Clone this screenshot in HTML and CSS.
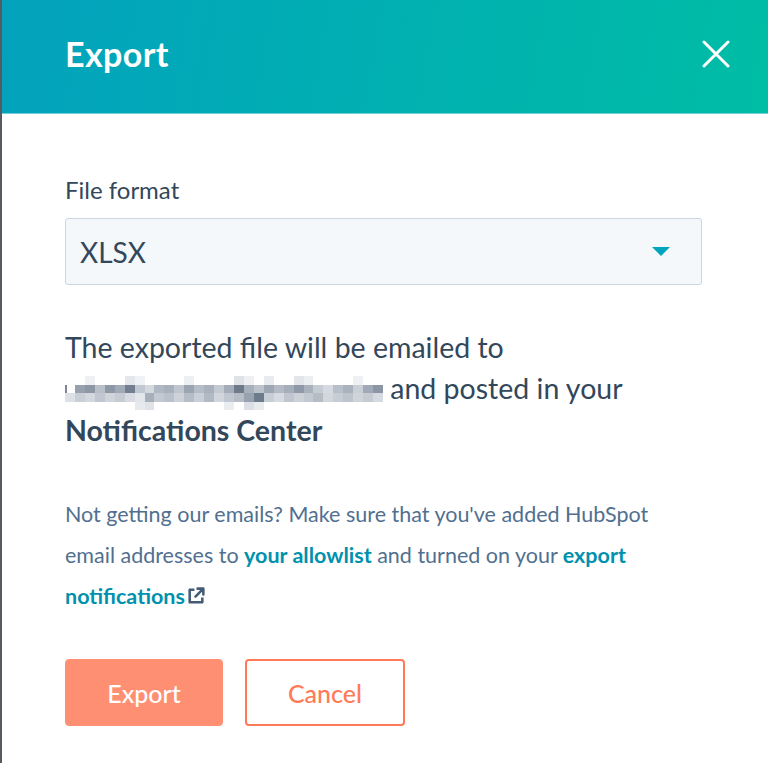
FILE: index.html
```html
<!DOCTYPE html>
<html lang="en">
<head>
<meta charset="utf-8">
<title>Export</title>
<link rel="stylesheet" href="styles.css">
</head>
<body>
<div class="modal">
  <header class="modal-header">
    <h1 class="modal-title">Export</h1>
    <button class="close" aria-label="Close">
      <svg width="28" height="28" viewBox="0 0 28 28"><path d="M2 2 L26 26 M26 2 L2 26" stroke="#fff" stroke-width="3" stroke-linecap="round" fill="none"/></svg>
    </button>
  </header>
  <main class="modal-body">
    <label class="field-label">File format</label>
    <div class="select">
      <span class="select-value">XLSX</span>
      <svg class="caret" width="18" height="9" viewBox="0 0 18 9"><path d="M0 0 H18 L9 9 Z" fill="#00a4bd"/></svg>
    </div>
    <p class="lead">The exported file will be emailed to <span class="redacted"><svg width="318" height="34" viewBox="0 0 32 4" preserveAspectRatio="none" shape-rendering="crispEdges">
      <rect x="0" y="1" width="0.2" height="1" fill="#7d8796"/>
      <rect x="2" y="0" width="1" height="1" fill="#eef0f3"/>
      <rect x="6" y="0" width="1" height="1" fill="#e4e8ec"/>
      <rect x="7" y="0" width="1" height="1" fill="#f0f2f5"/>
      <rect x="12" y="0" width="1" height="1" fill="#edf0f3"/>
      <rect x="17" y="0" width="1" height="1" fill="#dfe3e8"/>
      <rect x="18" y="0" width="1" height="1" fill="#eef0f3"/>
      <rect x="20" y="0" width="1" height="1" fill="#e8ebef"/>
      <rect x="23" y="0" width="1" height="1" fill="#e2e6eb"/>
      <rect x="24" y="0" width="1" height="1" fill="#eceff2"/>
      <rect x="29" y="0" width="1" height="1" fill="#eef0f3"/>
      <rect x="1" y="1" width="1" height="1" fill="#97a1ae"/>
      <rect x="2" y="1" width="1" height="1" fill="#8c96a5"/>
      <rect x="3" y="1" width="1" height="1" fill="#b9c0ca"/>
      <rect x="4" y="1" width="1" height="1" fill="#8e98a7"/>
      <rect x="5" y="1" width="1" height="1" fill="#a1aab6"/>
      <rect x="6" y="1" width="1" height="1" fill="#737f91"/>
      <rect x="7" y="1" width="1" height="1" fill="#c2c8d1"/>
      <rect x="8" y="1" width="1" height="1" fill="#d4d9e0"/>
      <rect x="9" y="1" width="1" height="1" fill="#b0b8c3"/>
      <rect x="10" y="1" width="1" height="1" fill="#a8b0bc"/>
      <rect x="11" y="1" width="1" height="1" fill="#bfc6cf"/>
      <rect x="12" y="1" width="1" height="1" fill="#9ba4b1"/>
      <rect x="13" y="1" width="1" height="1" fill="#b5bcc6"/>
      <rect x="14" y="1" width="1" height="1" fill="#a9b1bc"/>
      <rect x="15" y="1" width="1" height="1" fill="#c4cad2"/>
      <rect x="16" y="1" width="1" height="1" fill="#a3acb8"/>
      <rect x="17" y="1" width="1" height="1" fill="#6d7a8c"/>
      <rect x="18" y="1" width="1" height="1" fill="#a7afbb"/>
      <rect x="19" y="1" width="1" height="1" fill="#bcc3cc"/>
      <rect x="20" y="1" width="1" height="1" fill="#9ea7b3"/>
      <rect x="21" y="1" width="1" height="1" fill="#b3bac5"/>
      <rect x="22" y="1" width="1" height="1" fill="#a6aebb"/>
      <rect x="23" y="1" width="1" height="1" fill="#8f99a7"/>
      <rect x="24" y="1" width="1" height="1" fill="#a9b1bd"/>
      <rect x="25" y="1" width="1" height="1" fill="#c6ccd4"/>
      <rect x="26" y="1" width="1" height="1" fill="#d5dae0"/>
      <rect x="27" y="1" width="1" height="1" fill="#b8bfc9"/>
      <rect x="28" y="1" width="1" height="1" fill="#aab2bd"/>
      <rect x="29" y="1" width="1" height="1" fill="#c9cfd6"/>
      <rect x="30" y="1" width="1" height="1" fill="#a0a9b5"/>
      <rect x="31" y="1" width="1" height="1" fill="#8b95a4"/>
      <rect x="0" y="2" width="1" height="1" fill="#dde1e6"/>
      <rect x="1" y="2" width="1" height="1" fill="#c9cfd7"/>
      <rect x="2" y="2" width="1" height="1" fill="#d3d8df"/>
      <rect x="3" y="2" width="1" height="1" fill="#c0c7d0"/>
      <rect x="4" y="2" width="1" height="1" fill="#d0d5dc"/>
      <rect x="5" y="2" width="1" height="1" fill="#c6ccd4"/>
      <rect x="6" y="2" width="1" height="1" fill="#d8dce2"/>
      <rect x="7" y="2" width="1" height="1" fill="#e3e6eb"/>
      <rect x="8" y="2" width="1" height="1" fill="#a7afbb"/>
      <rect x="9" y="2" width="1" height="1" fill="#c3c9d2"/>
      <rect x="10" y="2" width="1" height="1" fill="#bac1cb"/>
      <rect x="11" y="2" width="1" height="1" fill="#cdd2d9"/>
      <rect x="12" y="2" width="1" height="1" fill="#b6bdc7"/>
      <rect x="13" y="2" width="1" height="1" fill="#c9cfd6"/>
      <rect x="14" y="2" width="1" height="1" fill="#b1b9c4"/>
      <rect x="15" y="2" width="1" height="1" fill="#d1d6dd"/>
      <rect x="16" y="2" width="1" height="1" fill="#c0c7d0"/>
      <rect x="17" y="2" width="1" height="1" fill="#b6bdc7"/>
      <rect x="18" y="2" width="1" height="1" fill="#98a2af"/>
      <rect x="19" y="2" width="1" height="1" fill="#6e7b8d"/>
      <rect x="20" y="2" width="1" height="1" fill="#c8ced6"/>
      <rect x="21" y="2" width="1" height="1" fill="#d6dbe1"/>
      <rect x="22" y="2" width="1" height="1" fill="#bfc6cf"/>
      <rect x="23" y="2" width="1" height="1" fill="#cdd2d9"/>
      <rect x="24" y="2" width="1" height="1" fill="#c3c9d1"/>
      <rect x="25" y="2" width="1" height="1" fill="#b5bcc6"/>
      <rect x="26" y="2" width="1" height="1" fill="#d2d7dd"/>
      <rect x="27" y="2" width="1" height="1" fill="#c7cdd5"/>
      <rect x="28" y="2" width="1" height="1" fill="#bdc4cd"/>
      <rect x="29" y="2" width="1" height="1" fill="#cfd4db"/>
      <rect x="30" y="2" width="1" height="1" fill="#c5cbd3"/>
      <rect x="31" y="2" width="1" height="1" fill="#d5dae0"/>
      <rect x="7" y="3" width="1" height="1" fill="#e6e9ed"/>
      <rect x="8" y="3" width="1" height="1" fill="#dfe3e8"/>
      <rect x="16" y="3" width="1" height="1" fill="#eaedf0"/>
      <rect x="18" y="3" width="1" height="1" fill="#dce0e6"/>
      <rect x="19" y="3" width="1" height="1" fill="#e9ecef"/>
    </svg></span> and posted in your <strong>Notifications Center</strong></p>
    <p class="note">Not getting our emails? Make sure that you've added HubSpot email addresses to <a href="#" class="link">your allowlist</a> and turned on your <a href="#" class="link">export notifications<svg class="ext" width="20" height="20" viewBox="0 0 19 19"><path d="M8 3.5 H3.5 V15.5 H15.5 V11" fill="none" stroke="#425b76" stroke-width="2.4" stroke-linejoin="round"/><path d="M9 10 L16 3 M11 2.5 H16.5 V8" fill="none" stroke="#425b76" stroke-width="2.4" stroke-linecap="round" stroke-linejoin="round"/></svg></a></p>
    <div class="actions">
      <button class="btn btn-primary">Export</button>
      <button class="btn btn-secondary">Cancel</button>
    </div>
  </main>
</div>
</body>
</html>
```

FILE: styles.css
```css
* { box-sizing: border-box; }
html, body { margin: 0; padding: 0; background: #fff; }
body {
  font-family: Lato, "Open Sans", "Liberation Sans", sans-serif;
  color: #33475b;
}
.modal {
  width: 768px;
  height: 763px;
  border-left: 2px solid #555b60;
  overflow: hidden;
}
.modal-header {
  height: 114px;
  background: linear-gradient(100deg, #03a2bd 0%, #00b1b0 55%, #00bda5 100%);
  border-bottom: 1px solid #6fd0da;
  display: flex;
  align-items: center;
  justify-content: space-between;
  padding: 0 38px 6px 63px;
}
.modal-title {
  margin: 0;
  color: #fff;
  font-size: 34px;
  font-weight: 700;
  letter-spacing: 0.4px;
}
.close {
  background: none;
  border: 0;
  padding: 0;
  width: 28px;
  height: 28px;
  display: flex;
}
.modal-body {
  padding: 61px 66px 0 63px;
}
.field-label {
  display: block;
  font-size: 24px;
  line-height: 30px;
  font-weight: 400;
  margin-bottom: 13px;
}
.select {
  height: 67px;
  background: #f5f8fa;
  border: 1px solid #cbd6e2;
  border-radius: 3px;
  display: flex;
  align-items: center;
  justify-content: space-between;
  padding: 0 31px 0 14px;
}
.select-value {
  font-size: 28px;
  color: #33475b;
}
.caret { display: block; }
.lead {
  margin: 42px 0 0;
  font-size: 28.5px;
  line-height: 41px;
}
.lead strong { font-weight: 700; }
.redacted svg {
  display: inline-block;
  vertical-align: -11px;
}
.note {
  margin: 43px 0 0;
  max-width: 610px;
  font-size: 21.5px;
  line-height: 41px;
  color: #516f90;
}
.link {
  color: #0091ae;
  font-weight: 700;
  text-decoration: none;
}
.ext {
  vertical-align: -2px;
  margin-left: 1px;
}
.actions {
  display: flex;
  gap: 22px;
  margin-top: 42px;
}
.btn {
  height: 67px;
  border-radius: 4px;
  font-family: inherit;
  font-size: 25px;
  font-weight: 500;
  cursor: pointer;
}
.btn-primary {
  width: 158px;
  background: #ff8f73;
  border: 1px solid #ff8f73;
  color: #fff;
}
.btn-secondary {
  width: 160px;
  background: #fff;
  border: 2px solid #ff7a59;
  color: #ff7a59;
}
```
